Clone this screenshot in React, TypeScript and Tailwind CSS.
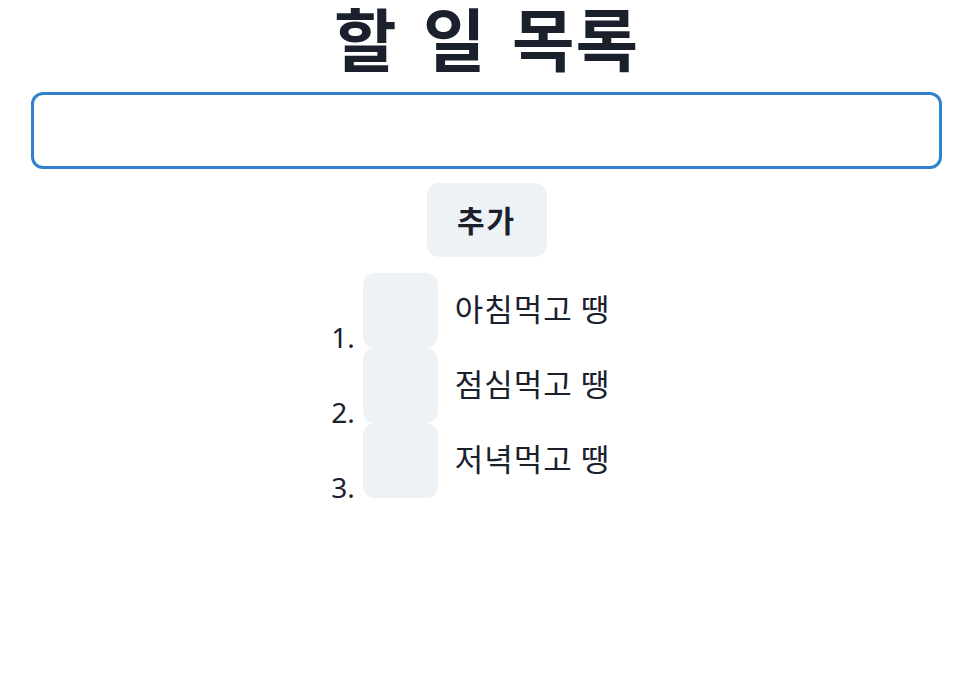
import { useState } from "react"

type Todo = {
  id: number
  text: string
}

const initialTodos: Todo[] = [
  { id: 1, text: "아침먹고 땡" },
  { id: 2, text: "점심먹고 땡" },
  { id: 3, text: "저녁먹고 땡" },
]

const font = { fontFamily: '"Noto Sans CJK KR", "Noto Sans", sans-serif' }

export default function App() {
  const [todos, setTodos] = useState<Todo[]>(initialTodos)
  const [input, setInput] = useState("")

  const handleAdd = () => {
    if (!input.trim()) return
    setTodos((prev) => [...prev, { id: Date.now(), text: input }])
    setInput("")
  }

  const handleRemove = (id: number) => {
    setTodos((prev) => prev.filter((t) => t.id !== id))
  }

  return (
    <div className="min-h-screen bg-white text-[#1a202c]" style={font}>
      <div className="ml-[31px] w-[911px] pt-[1px] flex flex-col items-center">
        <h1 className="text-[68px] leading-[1.45] -mt-[13px] font-bold tracking-[1px] [word-spacing:9px]">할 일 목록</h1>

        <input
          value={input}
          onChange={(e) => setInput(e.target.value)}
          className="mt-[5px] w-full h-[77px] rounded-[12px] border-[3px] border-[#3182ce] px-6 text-[30px] outline-none"
        />

        <button
          onClick={handleAdd}
          className="mt-[14px] w-[120px] h-[74px] rounded-[12px] bg-[#edf2f7] text-[30px] font-bold tracking-[2px]"
        >
          추가
        </button>

        {/* markers are laid out by hand so they sit on the box bottom */}
        <ol className="mt-[16px] w-fit pr-[38px]">
          {todos.map((todo, i) => (
            <li key={todo.id} className="flex items-center">
              <span className="w-[30px] self-end text-right text-[28px] leading-none -mb-[3px]" style={{ fontFamily: '"Noto Sans", sans-serif' }}>
                {i + 1}.
              </span>
              <button
                onClick={() => handleRemove(todo.id)}
                className="ml-[8px] w-[75px] h-[75px] rounded-[12px] bg-[#edf2f7]"
              />
              <span className="ml-[17px] pb-[5px] text-[31px] leading-none tracking-[1px]">{todo.text}</span>
            </li>
          ))}
        </ol>
      </div>
    </div>
  )
}
